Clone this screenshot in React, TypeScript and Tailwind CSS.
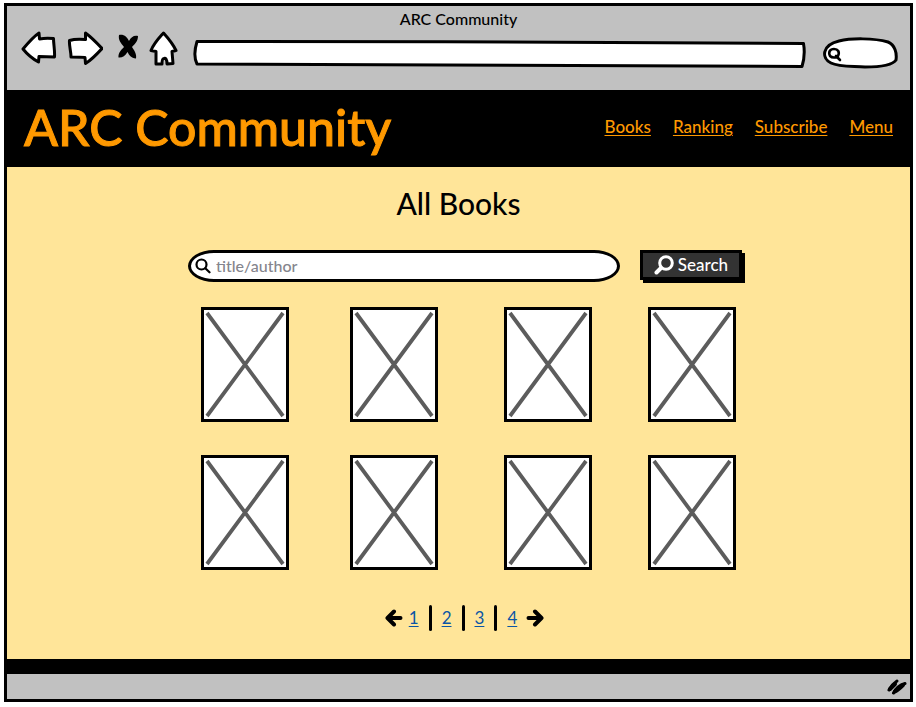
import React from "react";

const navItems = ["Books", "Ranking", "Subscribe", "Menu"];
const books = [1, 2, 3, 4, 5, 6, 7, 8];
const pages = [1, 2, 3, 4];

function BackIcon() {
  return (
    <svg viewBox="0 0 36 36" className="h-9 w-9" fill="white" stroke="black" strokeWidth="3" strokeLinejoin="round" strokeLinecap="round">
      <path d="M2 18C7 12 12 6 18 2L18.500 8C23 7 28 7 32.500 7.500C32.500 13 34 20 33.500 26L18 25.500L17.500 31C12 28 6 23 2 18Z" />
    </svg>
  );
}

function ForwardIcon() {
  return (
    <svg viewBox="0 0 36 36" className="h-9 w-9" fill="white" stroke="black" strokeWidth="3" strokeLinejoin="round" strokeLinecap="round">
      <path d="M2.500 9.500C7 8 13 8 18.500 8.500L18.500 2C24 6 29 11 35 17.500C30 23 24 29 18.500 32.500L18 26.500C13 26 9 26 4 26C4 20 2 15 2.500 9.500Z" />
    </svg>
  );
}

function StopIcon() {
  return (
    <svg viewBox="0 0 22 36" className="h-9 w-[22px]">
      <path d="M2 4C7 3 10 6 12 10C14 6 17 4 21 5C21 10 18 13 15 16C17 19 20 23 19 27.500C14 27 12 24 10.500 21C8 25 5 27 1.500 26.500C1 22 4 19 7 16C4 12 1 9 2 4Z" />
    </svg>
  );
}

function HomeIcon() {
  return (
    <svg viewBox="0 0 30 36" className="h-9 w-[30px]" fill="white" stroke="black" strokeWidth="3" strokeLinejoin="round" strokeLinecap="round">
      <path d="M14.500 2C19 7 24 13 27 19.500L23 20.500L24 32.500L18 33C18 28 16.500 27 15 27.500C13 27.500 13 30 13 33L7 33L7 20.500L2 19.500C5 12 10 7 14.500 2Z" />
    </svg>
  );
}

function MagnifierLeft({ className }: { className: string }) {
  return (
    <svg viewBox="0 0 16 16" className={className} fill="none" stroke="currentColor" strokeWidth="2.200" strokeLinecap="round">
      <circle cx="6.500" cy="6.500" r="5" />
      <path d="M10.300 10.300L14.500 14.300" />
    </svg>
  );
}

function Cover() {
  return (
    <a href="#book" aria-label="Book" className="block h-[115px] w-[88px] border-[3px] border-black bg-white">
      <svg viewBox="0 0 82 109" className="h-full w-full" stroke="#5c5c5c" strokeWidth="3.800">
        <path d="M3 3L79 106M79 3L3 106" />
      </svg>
    </a>
  );
}

function Arrow({ className }: { className: string }) {
  return (
    <svg viewBox="0 0 18 18" className={className} fill="none" stroke="black" strokeWidth="4" strokeLinecap="round" strokeLinejoin="round">
      <path d="M15.500 9H3M9 2.500L2.500 9L9 15.500" />
    </svg>
  );
}

export default function App() {
  return (
    <div className="bg-white pt-[3px] pr-[3px] pb-[5px] pl-1 font-['Lato','Noto_Sans',sans-serif] text-black">
      <div className="border-[3px] border-black bg-[#c1c1c1]">
        <div className="pb-5">
          <div className="pt-[1px] text-center text-base leading-6 font-medium">ARC Community</div>
          <div className="flex items-start pr-3 pl-[14px]">
            <button aria-label="Back"><BackIcon /></button>
            <button aria-label="Forward" className="ml-[10px]"><ForwardIcon /></button>
            <button aria-label="Stop" className="ml-[14px]"><StopIcon /></button>
            <button aria-label="Home" className="ml-[10px]"><HomeIcon /></button>
            <div className="mt-[9px] ml-[14px] grid h-[30px] flex-1">
              <svg viewBox="0 0 612 30" preserveAspectRatio="none" className="col-start-1 row-start-1 h-full w-full" fill="white" stroke="black" strokeWidth="3" strokeLinejoin="round">
                <path d="M4 1.500C200 0.500 430 3 609.500 3.500C611 12 610 20 608 26.500C400 26.500 200 23.500 4 24C0.500 17 2 8 4 1.500Z" />
              </svg>
              <input aria-label="Address" className="col-start-1 row-start-1 w-full bg-transparent px-3 outline-none" />
            </div>
            <div className="mt-1.5 ml-4 grid h-8 w-[76px]">
              <svg viewBox="0 0 76 32" className="col-start-1 row-start-1 h-full w-full" fill="none" stroke="black" strokeWidth="3" strokeLinecap="round">
                <path fill="white" d="M17 4C29 1 52 1 66 5C73 8 75 16 74 23C70 29 55 30 43 30C31 29 17 30 9 26C-1 21 0 8 17 4Z" />
                <path strokeWidth="2.600" d="M12 12C8 12 6 15 8 19C10 21 14 21 16 19C18 15 16 12 12 12M14 19L18 23" />
              </svg>
              <input aria-label="Web search" className="col-start-1 row-start-1 w-full bg-transparent pr-3 pl-6 outline-none" />
            </div>
          </div>
        </div>

        <header className="flex h-[77px] items-center justify-between bg-black pr-[17px] pb-[3px] pl-[17px] text-[#ff9900]">
          <h1 className="text-[50px] leading-none font-medium [-webkit-text-stroke:1px]">ARC Community</h1>
          <nav className="flex gap-[22px] text-[17px] font-medium">
            {navItems.map((item) => (
              <a key={item} href="#nav" className="underline underline-offset-2">{item}</a>
            ))}
          </nav>
        </header>

        <main className="bg-[#ffe599] pt-[18px] pb-[26px]">
          <h2 className="text-center text-[30px] leading-9 font-medium">All Books</h2>
          <div className="flex flex-col items-center pt-[29px] pl-4">
            <form className="flex w-full max-w-[557px] gap-5 pr-[3px]" onSubmit={(e) => e.preventDefault()}>
              <label className="flex h-8 flex-1 items-center gap-[5px] rounded-[26px/16px] border-[3px] border-black bg-white pl-1">
                <MagnifierLeft className="h-4 w-4" />
                <input aria-label="title/author" placeholder="title/author" className="min-w-0 flex-1 bg-transparent pr-4 text-base leading-6 font-medium outline-none placeholder:text-[#85858d]" />
              </label>
              <button className="flex h-[30px] w-[102px] items-center justify-center gap-1 border-[3px] border-black bg-[#333] text-[17px] font-medium text-white shadow-[3px_3px_0_black]">
                <svg viewBox="0 0 20 20" className="h-5 w-5" fill="none" stroke="white" strokeLinecap="round">
                  <circle cx="12" cy="8" r="6.300" strokeWidth="3" />
                  <path d="M7 13L2.500 17.500" strokeWidth="4" />
                </svg>
                Search
              </button>
            </form>
            <div className="mt-[25px] ml-1 grid w-full max-w-[535px] grid-cols-[149fr_155fr_144fr_88fr] gap-y-[33px]">
              {books.map((b) => <Cover key={b} />)}
            </div>
            <nav aria-label="Pages" className="mt-[34px] mr-1 mb-[1px] flex h-7 items-center text-[17px]">
              <button aria-label="Previous page" className="mr-[6px]"><Arrow className="h-[18px] w-[18px]" /></button>
              {pages.map((p) => (
                <React.Fragment key={p}>
                  {p > 1 && <span className="mx-[10px] h-[26px] w-[3px] rounded-full bg-black" />}
                  <a href="#page" className="text-[#0b55a5] underline underline-offset-2">{p}</a>
                </React.Fragment>
              ))}
              <button aria-label="Next page" className="ml-[9px]"><Arrow className="h-[18px] w-[18px] rotate-180" /></button>
            </nav>
          </div>
        </main>
        <div className="h-[15px] bg-black" />
        <footer className="flex h-[25px] items-center justify-end pr-[3px]">
          <svg viewBox="0 0 20 16" className="h-4 w-5" fill="none" stroke="black" strokeLinecap="round" strokeWidth="3">
            <path d="M2 11C4 7 7 4 10 2M6.500 14C9 9 13 6 18 4.500" />
            <path d="M3 10L8 5M8 12.500C11 11 14 8 16 6" strokeWidth="4" />
          </svg>
        </footer>
      </div>
    </div>
  );
}
